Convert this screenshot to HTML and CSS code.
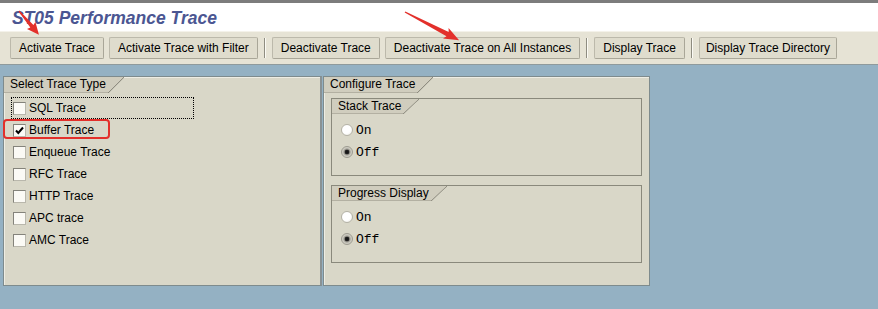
FILE: index.html
```html
<!DOCTYPE html>
<html lang="en">
<head>
    <meta charset="UTF-8">
    <meta name="viewport" content="width=device-width, initial-scale=1.0">
    <title>ST05 Performance Trace</title>
    <link rel="stylesheet" href="styles.css">
</head>
<body>
    <div class="window">
        <div class="title-bar">
            <h1>ST05 Performance Trace</h1>
        </div>
        <div class="toolbar">
            <button>Activate Trace</button>
            <button>Activate Trace with Filter</button>
            <span class="sep"></span>
            <button>Deactivate Trace</button>
            <button>Deactivate Trace on All Instances</button>
            <span class="sep"></span>
            <button>Display Trace</button>
            <span class="sep"></span>
            <button class="last">Display Trace Directory</button>
        </div>
        <div class="content">
            <section class="panel panel-type">
                <div class="tab">Select Trace Type</div>
                <ul class="checks">
                    <li class="focus"><span class="cb"></span>SQL Trace</li>
                    <li><span class="cb checked"><svg viewBox="0 0 11 11" width="11" height="11"><path d="M2 5.5 L4.3 8 L9 2.5" fill="none" stroke="#000" stroke-width="2"/></svg></span>Buffer Trace</li>
                    <li><span class="cb"></span>Enqueue Trace</li>
                    <li><span class="cb"></span>RFC Trace</li>
                    <li><span class="cb"></span>HTTP Trace</li>
                    <li><span class="cb"></span>APC trace</li>
                    <li><span class="cb"></span>AMC Trace</li>
                </ul>
            </section>
            <section class="panel panel-config">
                <div class="tab">Configure Trace</div>
                <div class="group">
                    <div class="tab">Stack Trace</div>
                    <div class="radio-row"><span class="rb"></span>On</div>
                    <div class="radio-row"><span class="rb on"></span>Off</div>
                </div>
                <div class="group">
                    <div class="tab">Progress Display</div>
                    <div class="radio-row"><span class="rb"></span>On</div>
                    <div class="radio-row"><span class="rb on"></span>Off</div>
                </div>
            </section>
        </div>

        <!-- screenshot annotations -->
        <svg class="marks" width="878" height="309" viewBox="0 0 878 309">
            <rect x="4" y="120" width="105" height="18" rx="3" fill="none" stroke="#e3302b" stroke-width="2"/>
            <polygon transform="translate(19 11) rotate(50)" points="0,-0.6 20,-2 19,-5.5 31,0 19,5.5 20,2 0,0.6" fill="#e3302b"/>
            <polygon transform="translate(405 12) rotate(27.5)" points="0,-0.7 48,-2.4 46,-6 61,0 46,6 48,2.4 0,0.7" fill="#e3302b"/>
        </svg>
    </div>
</body>
</html>
```

FILE: styles.css
```css
body {
    margin: 0;
    padding: 0;
    background-color: #94b1c3;
    font-family: "Liberation Sans", Arial, sans-serif;
    font-size: 12px;
    color: #000;
}
.window {
    position: relative;
    width: 878px;
    height: 309px;
    overflow: hidden;
}
.title-bar {
    height: 28px;
    border-top: 3px solid #7c7c7c;
    background-color: #fff;
    padding-left: 12px;
}
.title-bar h1 {
    margin: 0;
    padding-top: 1px;
    font-size: 17.5px;
    font-style: italic;
    font-weight: bold;
    line-height: 28px;
    color: #4b5692;
}
.toolbar {
    display: flex;
    align-items: center;
    gap: 5px;
    height: 32px;
    padding-left: 10px;
    background-color: #e6e3d5;
    border-top: 1px solid #f4f2ea;
    border-bottom: 1px solid #8f9a9c;
}
.toolbar button {
    height: 22px;
    padding: 0 8px;
    font-family: "Liberation Sans", Arial, sans-serif;
    font-size: 12px;
    color: #000;
    background-color: #dfdccd;
    border: 1px solid #bcb9ab;
    border-right-color: #a9a698;
    border-bottom-color: #a9a698;
    border-radius: 2px;
}
.toolbar button.last {
    padding: 0 6px;
}
.toolbar .sep {
    width: 0;
    height: 20px;
    margin: 0 1px;
    border-left: 1px solid #8e8c80;
    border-right: 1px solid #fbfaf4;
}
.content {
    display: flex;
    gap: 1px;
    padding: 11px 0 0 3px;
}
.panel {
    height: 208px;
    background-color: #d9d7c8;
    border: 1px solid #7e8b8d;
    box-shadow: inset 1px 1px 0 #eeede4;
}
.panel-type {
    width: 316px;
    border-right: 2px solid #8a9294;
}
.panel-config {
    width: 325px;
}
.tab {
    position: relative;
    display: inline-block;
    height: 15px;
    line-height: 15px;
    padding: 0 2px 0 6px;
    margin-right: 16px;
    background-color: #d0cdbe;
    border-bottom: 1px solid #b3b0a2;
}
.tab::after {
    content: '';
    position: absolute;
    top: 0;
    right: -16px;
    width: 16px;
    height: 16px;
    background: linear-gradient(to bottom right, #d0cdbe 47%, #8f8d81 50%, transparent 54%);
}
.checks {
    list-style: none;
    margin: 4px 0 0 7px;
    padding: 0;
}
.checks li {
    display: flex;
    align-items: center;
    width: 180px;
    height: 20px;
    padding-left: 1px;
    border: 1px dotted transparent;
}
.checks li.focus {
    border-color: #000;
}
.cb {
    display: inline-flex;
    align-items: center;
    justify-content: center;
    box-sizing: border-box;
    width: 13px;
    height: 13px;
    margin-right: 3px;
    background-color: #fbfaf5;
    border: 1px solid #84837b;
    border-right-color: #b9b7ac;
    border-bottom-color: #b9b7ac;
}
.group {
    width: 309px;
    margin: 5px 0 0 7px;
    padding-bottom: 12px;
    border: 1px solid #8a897c;
}
.group + .group {
    margin-top: 9px;
}
.group .tab {
    height: 14px;
    line-height: 14px;
}
.group .tab::after {
    height: 15px;
}
.radio-row {
    display: flex;
    align-items: center;
    height: 22px;
    padding-left: 9px;
    font-family: "Liberation Mono", "Courier New", monospace;
    font-size: 13px;
}
.group .tab + .radio-row {
    margin-top: 5px;
}
.rb {
    box-sizing: border-box;
    width: 12px;
    height: 12px;
    margin-right: 3px;
    border-radius: 50%;
    border: 1px solid #b4b2a6;
    background: radial-gradient(circle at 40% 40%, #ffffff 50%, #e8e6dc 100%);
}
.rb.on {
    border-color: #9d9b90;
    background: radial-gradient(circle, #111 0, #222 2px, #8a8880 2.6px, #c9c7bd 4px, #e0ded4 100%);
}
.marks {
    position: absolute;
    top: 0;
    left: 0;
    pointer-events: none;
}
```
